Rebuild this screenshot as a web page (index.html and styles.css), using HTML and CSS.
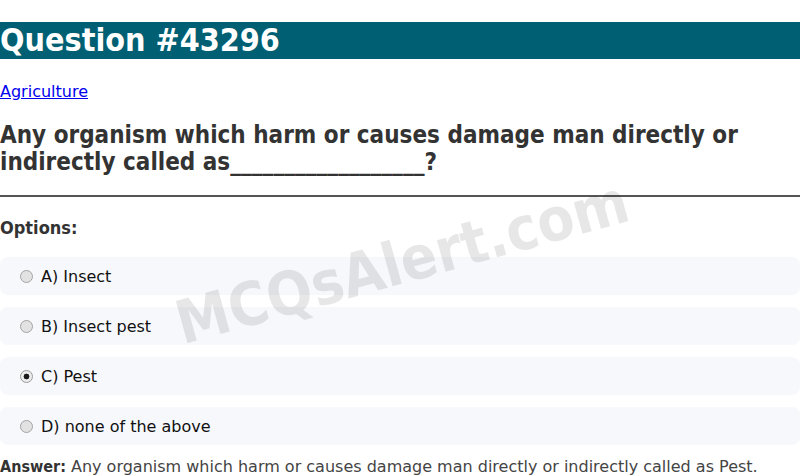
FILE: index.html
```html
<!DOCTYPE html>
<html lang="en">
<head>
<meta charset="utf-8">
<title>Question #43296</title>
<link rel="stylesheet" href="styles.css">
</head>
<body>
<div class="page">
  <h1 class="title">Question #43296</h1>
  <p class="category"><a href="#">Agriculture</a></p>
  <h2 class="question">Any organism which harm or causes damage man directly or indirectly called as__________________?</h2>
  <hr class="divider">
  <h3 class="options-label">Options:</h3>
  <div class="options">
    <label class="option"><input class="radio" type="radio" name="opt" disabled> A) Insect</label>
    <label class="option"><input class="radio" type="radio" name="opt" disabled> B) Insect pest</label>
    <label class="option"><input class="radio" type="radio" name="opt" disabled checked> C) Pest</label>
    <label class="option"><input class="radio" type="radio" name="opt" disabled> D) none of the above</label>
  </div>
  <p class="answer"><strong>Answer:</strong> Any organism which harm or causes damage man directly or indirectly called as Pest.</p>
  <div class="watermark">MCQsAlert.com</div>
</div>
</body>
</html>
```
FILE: styles.css
```css
html, body {
  margin: 0;
  padding: 0;
  background: #fff;
}
body {
  font-family: "DejaVu Sans", Verdana, sans-serif;
  color: #333;
  overflow: hidden;
}
.page {
  position: relative;
}
.title {
  margin: 22px 0 0;
  background: #005f73;
  color: #fff;
  font-size: 32px;
  line-height: 37px;
  font-weight: bold;
  font-stretch: condensed;
}
.category {
  margin: 23px 0 0;
  font-size: 16px;
  line-height: 19px;
}
.category a {
  color: #0000ee;
}
.question {
  margin: 21px 0 0;
  font-size: 24px;
  line-height: 27px;
  font-weight: bold;
  font-stretch: condensed;
  color: #333;
}
.divider {
  margin: 19px 0 0;
  border: 0;
  border-top: 2px solid #555;
  height: 0;
}
.options-label {
  margin: 20px 0 0;
  font-size: 18px;
  line-height: 22px;
  font-weight: bold;
  font-stretch: condensed;
  color: #333;
}
.options {
  margin-top: 18px;
  display: flex;
  flex-direction: column;
  gap: 12px;
}
.option {
  display: flex;
  align-items: center;
  gap: 8px;
  height: 38px;
  padding-left: 20px;
  background: #f7f8fc;
  border-radius: 8px;
  font-size: 16px;
  color: #111;
}
.radio {
  appearance: none;
  -webkit-appearance: none;
  margin: 0;
  width: 13px;
  height: 13px;
  box-sizing: border-box;
  border-radius: 50%;
  border: 1px solid #a3a3a3;
  background: #e2e2e2;
  flex: none;
}
.radio:checked {
  background: radial-gradient(circle, #1a1a1a 0 2.6px, #ececec 3.2px);
  border-color: #9a9a9a;
}
.answer {
  margin: 12px 0 0;
  font-size: 16px;
  line-height: 19px;
  color: #444;
}
.answer strong {
  color: #333;
  font-stretch: condensed;
}
.watermark {
  position: absolute;
  left: 402px;
  top: 240px;
  transform: translate(-50%, -50%) rotate(-15.5deg);
  font-size: 60px;
  font-weight: bold;
  font-stretch: condensed;
  color: rgba(0, 0, 0, 0.095);
  white-space: nowrap;
  pointer-events: none;
}
```
